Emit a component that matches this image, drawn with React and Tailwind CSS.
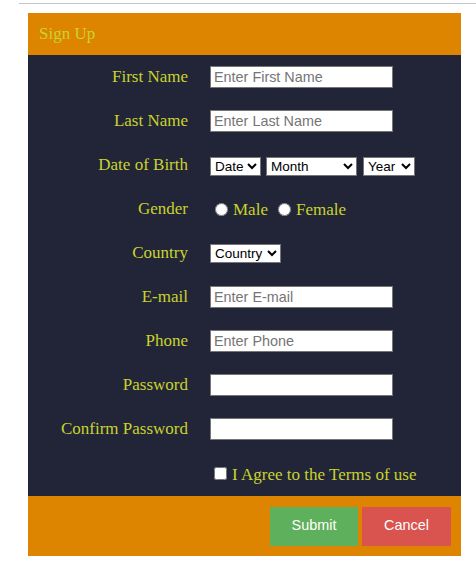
const serif = { fontFamily: '"Liberation Serif", "Times New Roman", serif' };

function Row({ label, children, shift = '' }) {
  return (
    <div className="flex h-[44px] items-center">
      <label className="w-[160px] text-right text-[17px] text-[#c9d32c] font-['Liberation_Serif',serif]">
        {label}
      </label>
      <div className={`ml-[22px] flex items-center ${shift}`}>{children}</div>
    </div>
  );
}

function TextInput({ placeholder, type = 'text' }) {
  return (
    <input
      type={type}
      placeholder={placeholder}
      className="w-[183px] h-[22px] bg-white border border-[#767676] px-[3px] text-[14.4px] text-black placeholder:text-[#757575] font-['Liberation_Sans',Arial,sans-serif] outline-none"
    />
  );
}

function Select({ width, label }) {
  return (
    <select
      className={`${width} h-[19px] bg-white border border-[#767676] text-[13.5px] text-black font-['Liberation_Sans',Arial,sans-serif]`}
      defaultValue=""
    >
      <option value="">{label}</option>
    </select>
  );
}

export default function App() {
  return (
    <div className="w-[476px] h-[568px] bg-white" style={serif}>
      <div className="ml-[19px] mt-[3px] h-px bg-[#c6c6c6]" />

      <div className="ml-[28px] mt-[9px] w-[433px]">
        <div className="h-[42px] bg-[#dd8500] pl-[11px] flex items-center">
          <span className="text-[17px] text-[#c9d32c] font-['Liberation_Serif',serif]">Sign Up</span>
        </div>

        <div className="bg-[#222538] pb-px">
          <Row label="First Name">
            <TextInput placeholder="Enter First Name" />
          </Row>
          <Row label="Last Name">
            <TextInput placeholder="Enter Last Name" />
          </Row>
          <Row label="Date of Birth" shift="translate-y-px">
            <Select width="w-[51px]" label="Date" />
            <div className="ml-[5px]">
              <Select width="w-[91px]" label="Month" />
            </div>
            <div className="ml-[6px]">
              <Select width="w-[52px]" label="Year" />
            </div>
          </Row>
          <Row label="Gender" shift="translate-y-px">
            <input type="radio" name="gender" className="ml-[5px] w-[13px] h-[13px] -translate-y-px" />
            <span className="ml-[5px] text-[17px] text-[#c9d32c] font-['Liberation_Serif',serif]">Male</span>
            <input type="radio" name="gender" className="ml-[10px] w-[13px] h-[13px] -translate-y-px" />
            <span className="ml-[5px] text-[17px] text-[#c9d32c] font-['Liberation_Serif',serif]">Female</span>
          </Row>
          <Row label="Country">
            <Select width="w-[71px]" label="Country" />
          </Row>
          <Row label="E-mail">
            <TextInput placeholder="Enter E-mail" type="email" />
          </Row>
          <Row label="Phone">
            <TextInput placeholder="Enter Phone" />
          </Row>
          <Row label="Password">
            <TextInput type="password" />
          </Row>
          <Row label="Confirm Password">
            <TextInput type="password" />
          </Row>
          <Row label="" shift="translate-y-[2px]">
            <input type="checkbox" className="ml-[4px] w-[13px] h-[13px] -translate-y-[2px]" />
            <span className="ml-[5px] text-[17px] text-[#c9d32c] font-['Liberation_Serif',serif]">
              I Agree to the Terms of use
            </span>
          </Row>
        </div>

        <div className="h-[60px] bg-[#dd8500] flex items-center justify-end gap-[4px] pr-[10px]">
          <button className="w-[88px] h-[39px] bg-[#5fb05c] text-white text-[14.4px] font-['Liberation_Sans',Arial,sans-serif]">
            Submit
          </button>
          <button className="w-[89px] h-[39px] bg-[#d9534f] text-white text-[14.4px] font-['Liberation_Sans',Arial,sans-serif]">
            Cancel
          </button>
        </div>
      </div>
    </div>
  );
}
